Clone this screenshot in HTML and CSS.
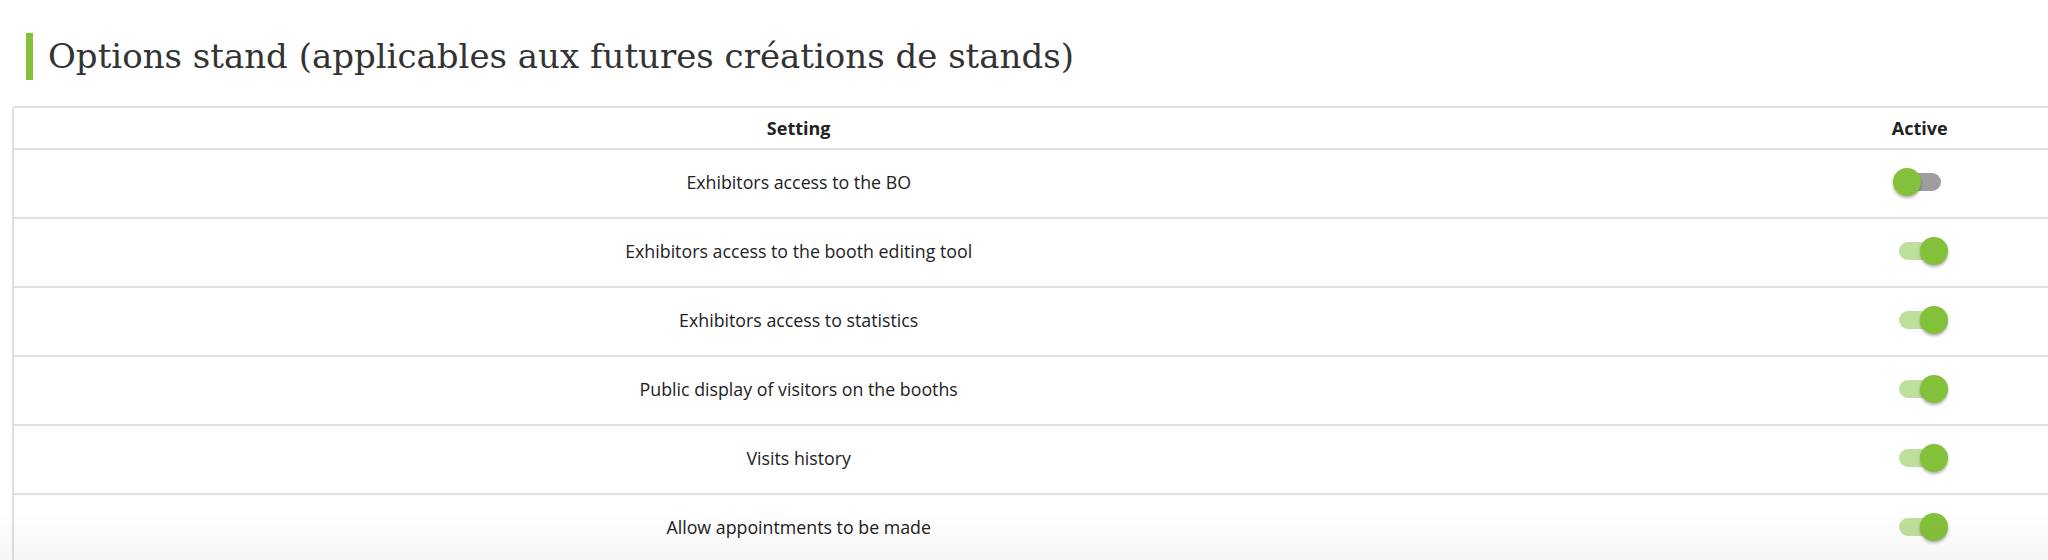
FILE: index.html
```html
<!DOCTYPE html>
<html lang="fr">
<head>
    <meta charset="UTF-8">
    <meta name="viewport" content="width=device-width, initial-scale=1.0">
    <title>Options stand</title>
    <link rel="stylesheet" href="styles.css">
</head>
<body>
    <div class="page">
        <h2 class="section-title">Options stand (applicables aux futures créations de stands)</h2>

        <div class="panel">
            <table class="settings">
                <thead>
                    <tr>
                        <th class="col-setting">Setting</th>
                        <th class="col-active">Active</th>
                    </tr>
                </thead>
                <tbody>
                    <tr>
                        <td>Exhibitors access to the BO</td>
                        <td><label class="switch"><input type="checkbox"><span class="track"></span></label></td>
                    </tr>
                    <tr>
                        <td>Exhibitors access to the booth editing tool</td>
                        <td><label class="switch"><input type="checkbox" checked><span class="track"></span></label></td>
                    </tr>
                    <tr>
                        <td>Exhibitors access to statistics</td>
                        <td><label class="switch"><input type="checkbox" checked><span class="track"></span></label></td>
                    </tr>
                    <tr>
                        <td>Public display of visitors on the booths</td>
                        <td><label class="switch"><input type="checkbox" checked><span class="track"></span></label></td>
                    </tr>
                    <tr>
                        <td>Visits history</td>
                        <td><label class="switch"><input type="checkbox" checked><span class="track"></span></label></td>
                    </tr>
                    <tr>
                        <td>Allow appointments to be made</td>
                        <td><label class="switch"><input type="checkbox" checked><span class="track"></span></label></td>
                    </tr>
                </tbody>
            </table>
        </div>
    </div>
    <div class="bottom-fade"></div>
</body>
</html>
```

FILE: styles.css
```css
body {
    font-family: "Open Sans", Arial, sans-serif;
    background-color: white;
    color: #222;
    margin: 0;
    padding: 0;
    overflow: hidden;
}
.page {
    padding-top: 33px;
}
.section-title {
    font-family: "DejaVu Serif", "Liberation Serif", serif;
    font-weight: normal;
    font-size: 34px;
    line-height: 47px;
    color: #333;
    margin: 0 0 26px 26px;
    padding-left: 15px;
    border-left: 7px solid #84c13a;
}
.panel {
    margin-left: 12px;
    width: 2242px;
    border-left: 2px solid #e0e0e0;
    border-top: 2px solid #e0e0e0;
    border-top-left-radius: 3px;
}
.settings {
    width: 100%;
    border-collapse: separate;
    border-spacing: 0;
}
.settings th {
    height: 40px;
    padding: 0;
    font-size: 18px;
    font-weight: bold;
    border-bottom: 2px solid #e0e0e0;
}
.settings td {
    height: 64px;
    padding: 0 0 3px;
    font-size: 17.8px;
    text-align: center;
    border-bottom: 2px solid #e0e0e0;
}
.col-setting {
    width: 70%;
}
.col-active {
    width: 30%;
}
.switch {
    position: relative;
    display: inline-block;
    width: 42px;
    height: 18px;
    margin-bottom: 3px;
    vertical-align: middle;
    cursor: pointer;
}
.switch input {
    display: none;
}
.track {
    display: block;
    width: 100%;
    height: 100%;
    border-radius: 9px;
    background-color: #9e9e9e;
}
.track::after {
    content: "";
    position: absolute;
    top: -5px;
    left: -6px;
    width: 28px;
    height: 28px;
    border-radius: 50%;
    background-color: #84c13a;
    box-shadow: 0 2px 3px rgba(0, 0, 0, 0.3);
}
.switch input:checked + .track {
    background-color: #bfe09c;
}
.switch input:checked + .track::after {
    left: 21px;
}
.bottom-fade {
    position: fixed;
    left: 0;
    right: 0;
    bottom: 0;
    height: 50px;
    background: linear-gradient(rgba(0, 0, 0, 0), rgba(0, 0, 0, 0.035));
    pointer-events: none;
}
```
